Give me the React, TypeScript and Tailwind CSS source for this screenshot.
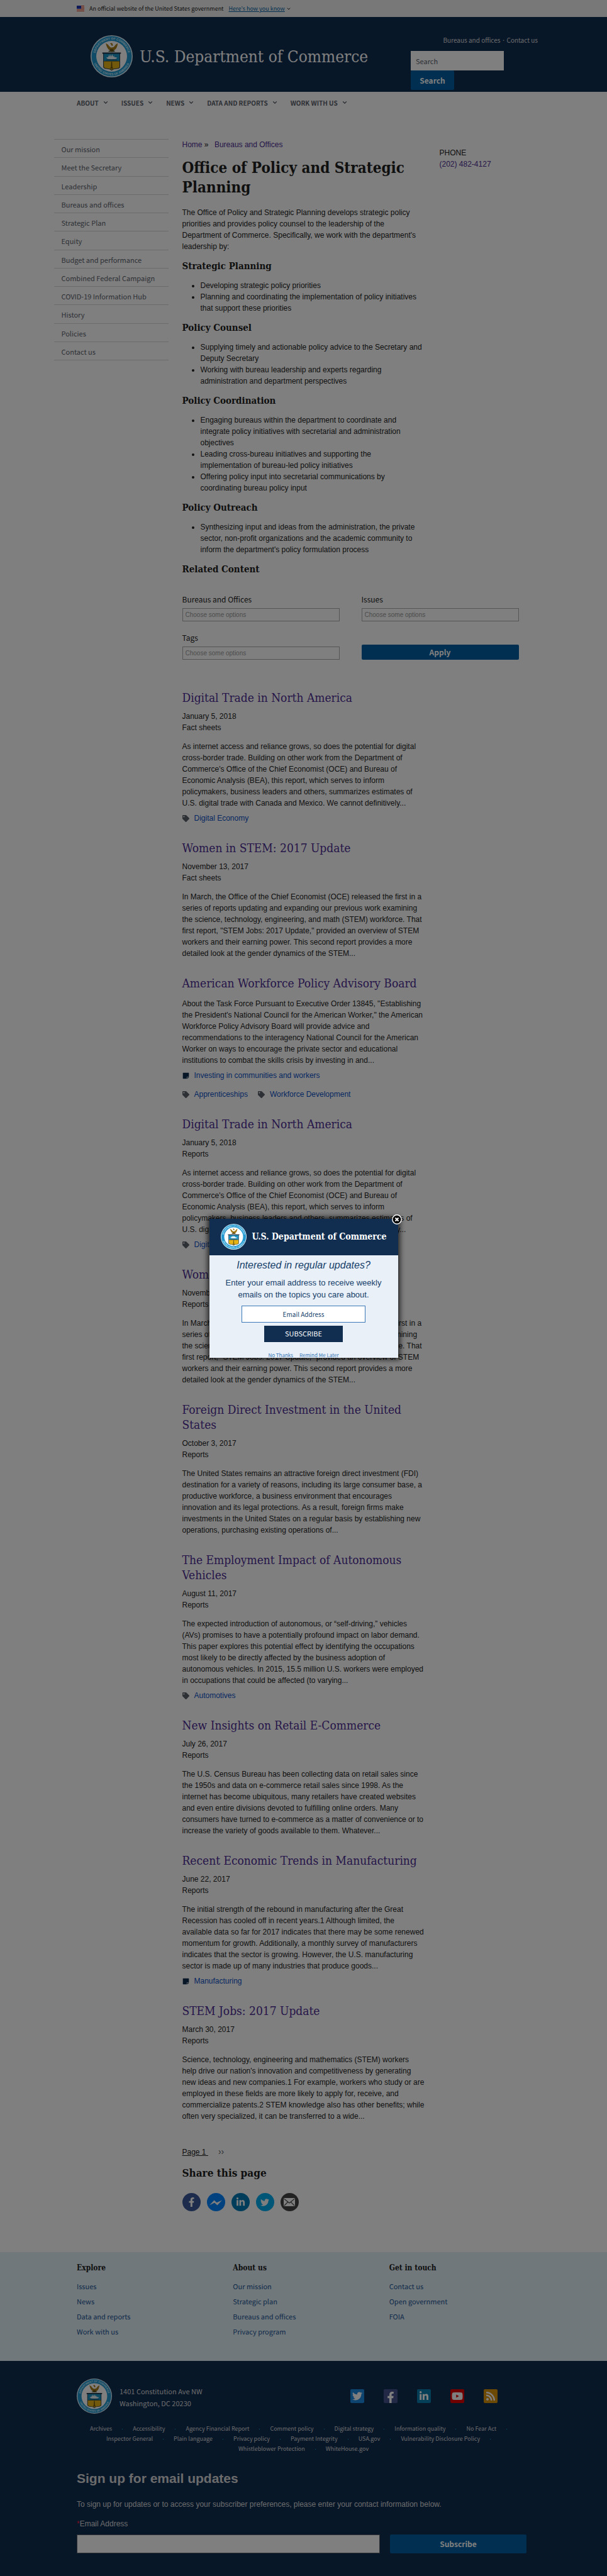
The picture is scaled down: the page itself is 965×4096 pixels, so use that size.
import React, { useId } from "react";
import {
  FaFacebookF,
  FaLinkedinIn,
  FaRss,
  FaStickyNote,
  FaTag,
  FaTwitter,
  FaYoutube,
} from "react-icons/fa";
import { ChevronDown } from "lucide-react";

const sans = "font-['Noto_Sans_CJK_JP','Noto_Sans_CJK_SC',sans-serif]";
const serif = "font-['DejaVu_Serif_Condensed','DejaVu_Serif',serif]";
const arial = "font-['Liberation_Sans',Arial,sans-serif]";

function Seal({ className }: { className: string }) {
  const id = useId();
  return (
    <svg viewBox="0 0 100 100" className={className} role="img" aria-label="Department of Commerce seal">
      <defs>
        <path id={`${id}t`} d="M10.5 50a39.5 39.5 0 0 1 79 0" />
        <path id={`${id}b`} d="M5 50a45 45 0 0 0 90 0" />
      </defs>
      <circle cx="50" cy="50" r="50" fill="#d8eef8" />
      <circle cx="50" cy="50" r="47.6" fill="#2196cf" />
      <circle cx="50" cy="50" r="36.5" fill="#fff" />
      <g fill="#c9ecfa" fontSize="7.4" fontWeight="700" fontFamily="Liberation Sans, Arial, sans-serif">
        <text textAnchor="middle">
          <textPath href={`#${id}t`} startOffset="50%">DEPARTMENT OF COMMERCE</textPath>
        </text>
        <text textAnchor="middle">
          <textPath href={`#${id}b`} startOffset="50%">UNITED STATES OF AMERICA</textPath>
        </text>
      </g>
      <g fill="#a67c1a">
        <path d="M50 25l-2-4-2-.5 2-1.700q2.500-.9 4 1l1 5.200z" />
        <path d="M36 19q3 14 10 17l3 3h4l3-3q7-4 8.500-17l-4.500 3-5 6-4 1h-3l-3-2-4-5z" />
        <path d="M42 39h16l-2-2.500H44z" fill="#3b4a35" />
        <path d="M46 33h8l-1 6h-6z" fill="#6b5514" />
      </g>
      <path d="M28 41h44v3h-2v31q0 4-8 5l-7 1-5 3-5-3-7-1q-8-1-8-5V44h-2z" fill="#1b3345" />
      <path d="M31.500 44h37v17h-37z" fill="#1d93c4" />
      <path d="M37 53l5-1 1-5 2 4 1-6 3 6 2-6 3 6 2-3v4l7 1-3 4H41z" fill="#e9f4f8" />
      <path d="M39 57q11 2 22 0M36 59.500h28" stroke="#12394f" strokeWidth="0.9" fill="none" />
      <path d="M31.500 62h37v13q0 2.500-6 3.500l-8 1.200-4.500 2.300-4.500-2.300-8-1.200q-6-1-6-3.500z" fill="#e6b316" />
      <path d="M49 63h2l.7 13 3 3.500h-9.400l3-3.500z" fill="#6b5514" />
    </svg>
  );
}

const navItems = ["About", "Issues", "News", "Data and reports", "Work with us"];

const sideItems = [
  "Our mission",
  "Meet the Secretary",
  "Leadership",
  "Bureaus and offices",
  "Strategic Plan",
  "Equity",
  "Budget and performance",
  "Combined Federal Campaign",
  "COVID-19 Information Hub",
  "History",
  "Policies",
  "Contact us",
];

const duties = [
  {
    title: "Strategic Planning",
    points: [
      "Developing strategic policy priorities",
      "Planning and coordinating the implementation of policy initiatives that support these priorities",
    ],
  },
  {
    title: "Policy Counsel",
    points: [
      "Supplying timely and actionable policy advice to the Secretary and Deputy Secretary",
      "Working with bureau leadership and experts regarding administration and department perspectives",
    ],
  },
  {
    title: "Policy Coordination",
    points: [
      "Engaging bureaus within the department to coordinate and integrate policy initiatives with secretarial and administration objectives",
      "Leading cross-bureau initiatives and supporting the implementation of bureau-led policy initiatives",
      "Offering policy input into secretarial communications by coordinating bureau policy input",
    ],
  },
  {
    title: "Policy Outreach",
    points: [
      "Synthesizing input and ideas from the administration, the private sector, non-profit organizations and the academic community to inform the department's policy formulation process",
    ],
  },
];

type Article = {
  title: string;
  date?: string;
  kind?: string;
  body: string;
  issues?: string[];
  tags?: string[];
};

const digitalTrade =
  "As internet access and reliance grows, so does the potential for digital cross-border trade. Building on other work from the Department of Commerce's Office of the Chief Economist (OCE) and Bureau of Economic Analysis (BEA), this report, which serves to inform policymakers, business leaders and others, summarizes estimates of U.S. digital trade with Canada and Mexico. We cannot definitively...";
const womenInStem =
  "In March, the Office of the Chief Economist (OCE) released the first in a series of reports updating and expanding our previous work examining the science, technology, engineering, and math (STEM) workforce. That first report, \"STEM Jobs: 2017 Update,\" provided an overview of STEM workers and their earning power. This second report provides a more detailed look at the gender dynamics of the STEM...";

const articles: Article[] = [
  { title: "Digital Trade in North America", date: "January 5, 2018", kind: "Fact sheets", body: digitalTrade, tags: ["Digital Economy"] },
  { title: "Women in STEM: 2017 Update", date: "November 13, 2017", kind: "Fact sheets", body: womenInStem },
  {
    title: "American Workforce Policy Advisory Board",
    body: "About the Task Force Pursuant to Executive Order 13845, \"Establishing the President's National Council for the American Worker,\" the American Workforce Policy Advisory Board will provide advice and recommendations to the interagency National Council for the American Worker on ways to encourage the private sector and educational institutions to combat the skills crisis by investing in and...",
    issues: ["Investing in communities and workers"],
    tags: ["Apprenticeships", "Workforce Development"],
  },
  { title: "Digital Trade in North America", date: "January 5, 2018", kind: "Reports", body: digitalTrade, tags: ["Digital Economy"] },
  { title: "Women in STEM: 2017 Update", date: "November 13, 2017", kind: "Reports", body: womenInStem },
  {
    title: "Foreign Direct Investment in the United States",
    date: "October 3, 2017",
    kind: "Reports",
    body: "The United States remains an attractive foreign direct investment (FDI) destination for a variety of reasons, including its large consumer base, a productive workforce, a business environment that encourages innovation and its legal protections. As a result, foreign firms make investments in the United States on a regular basis by establishing new operations, purchasing existing operations of...",
  },
  {
    title: "The Employment Impact of Autonomous Vehicles",
    date: "August 11, 2017",
    kind: "Reports",
    body: "The expected introduction of autonomous, or “self-driving,” vehicles (AVs) promises to have a potentially profound impact on labor demand. This paper explores this potential effect by identifying the occupations most likely to be directly affected by the business adoption of autonomous vehicles. In 2015, 15.5 million U.S. workers were employed in occupations that could be affected (to varying...",
    tags: ["Automotives"],
  },
  {
    title: "New Insights on Retail E-Commerce",
    date: "July 26, 2017",
    kind: "Reports",
    body: "The U.S. Census Bureau has been collecting data on retail sales since the 1950s and data on e-commerce retail sales since 1998. As the internet has become ubiquitous, many retailers have created websites and even entire divisions devoted to fulfilling online orders. Many consumers have turned to e-commerce as a matter of convenience or to increase the variety of goods available to them. Whatever...",
  },
  {
    title: "Recent Economic Trends in Manufacturing",
    date: "June 22, 2017",
    kind: "Reports",
    body: "The initial strength of the rebound in manufacturing after the Great Recession has cooled off in recent years.1 Although limited, the available data so far for 2017 indicates that there may be some renewed momentum for growth. Additionally, a monthly survey of manufacturers indicates that the sector is growing. However, the U.S. manufacturing sector is made up of many industries that produce goods...",
    issues: ["Manufacturing"],
  },
  {
    title: "STEM Jobs: 2017 Update",
    date: "March 30, 2017",
    kind: "Reports",
    body: "Science, technology, engineering and mathematics (STEM) workers help drive our nation's innovation and competitiveness by generating new ideas and new companies.1 For example, workers who study or are employed in these fields are more likely to apply for, receive, and commercialize patents.2 STEM knowledge also has other benefits; while often very specialized, it can be transferred to a wide...",
  },
];

const footerColumns = [
  { title: "Explore", links: ["Issues", "News", "Data and reports", "Work with us"] },
  { title: "About us", links: ["Our mission", "Strategic plan", "Bureaus and offices", "Privacy program"] },
  { title: "Get in touch", links: ["Contact us", "Open government", "FOIA"] },
];

const legalLinks = [
  "Archives",
  "Accessibility",
  "Agency Financial Report",
  "Comment policy",
  "Digital strategy",
  "Information quality",
  "No Fear Act",
  "Inspector General",
  "Plain language",
  "Privacy policy",
  "Payment Integrity",
  "USA.gov",
  "Vulnerability Disclosure Policy",
  "Whistleblower Protection",
  "WhiteHouse.gov",
];

function Flag() {
  return (
    <svg viewBox="0 0 12 9" className="h-[9px] w-3" aria-hidden="true">
      <path fill="#fff" d="M0 0h12v9H0z" />
      <path stroke="#db3e1f" d="M0 .5h12M0 2.500h12M0 4.500h12M0 6.500h12M0 8.500h12" />
      <path fill="#1e33b1" d="M0 0h7v5H0z" />
    </svg>
  );
}

function Banner() {
  return (
    <div className="bg-[#f1f1f1]">
      <div className={`mx-auto flex h-[27px] max-w-[745px] items-center px-3 text-[9px] text-[#212121] ${sans}`}>
        <Flag />
        <span className="ml-2">An official website of the United States government</span>
        <button type="button" className="ml-2 flex items-center gap-0.5 text-[#005ea2]">
          <span className="underline">Here's how you know</span>
          <ChevronDown className="size-2 text-[#212121]" strokeWidth={3} />
        </button>
      </div>
    </div>
  );
}

function Header() {
  return (
    <header>
      <div className="bg-[#112e51]">
        <div className="mx-auto flex h-[119px] max-w-[745px] justify-between pl-3">
          <a href="#home" className="ml-[22px] flex items-center gap-[11px] pt-1.5 text-white">
            <Seal className="size-[67px]" />
            <span className={`text-[26px] leading-8 whitespace-nowrap ${serif}`}>U.S. Department of Commerce</span>
          </a>
          <div className={`-mr-1 w-[206px] pt-7 ${sans}`}>
            <p className="pr-1 text-right text-[10px] leading-[18px] text-[#d6d7d9]">
              <a href="#bureaus">Bureaus and offices</a> · <a href="#contact">Contact us</a>
            </p>
            <form className="mt-2 flex flex-col items-start" onSubmit={(e) => e.preventDefault()}>
              <input
                type="search"
                aria-label="Search"
                placeholder="Search"
                className="h-[31px] w-[148px] bg-white px-2 text-[11px] text-[#5b616b] placeholder:text-[#5b616b]"
              />
              <button type="submit" className="h-[31px] w-[69px] rounded-xs bg-[#005ea2] text-[12px] font-bold text-white">
                Search
              </button>
            </form>
          </div>
        </div>
      </div>
      <nav className={`mx-auto max-w-[745px] px-3 ${sans}`}>
        <ul className="flex h-[34px] items-center gap-5">
          {navItems.map((item) => (
            <li key={item}>
              <button type="button" className="flex items-center gap-1.5 text-[10px] font-bold text-[#5b616b] uppercase">
                {item}
                <ChevronDown className="size-[10px]" strokeWidth={3} />
              </button>
            </li>
          ))}
        </ul>
      </nav>
    </header>
  );
}

function LabelList({ items, icon }: { items: string[]; icon: React.ReactNode }) {
  return (
    <ul className="flex gap-4">
      {items.map((item) => (
        <li key={item} className="flex items-center gap-2">
          {icon}
          <a href="#topic" className="text-[#0b4fc4]">{item}</a>
        </li>
      ))}
    </ul>
  );
}

function ArticleItem({ article }: { article: Article }) {
  return (
    <article>
      <h3 className={`text-[19px] leading-6 text-[#4c2c92] ${serif}`}>
        <a href="#article">{article.title}</a>
      </h3>
      {article.date && (
        <div className="mt-[9px]">
          <p>{article.date}</p>
          <p>{article.kind}</p>
        </div>
      )}
      <p className="mt-3">{article.body}</p>
      {(article.issues || article.tags) && (
        <div className="mt-1.5 flex flex-col gap-3">
          {article.issues && (
            <LabelList items={article.issues} icon={<FaStickyNote className="size-[11px] text-[#112e51]" />} />
          )}
          {article.tags && <LabelList items={article.tags} icon={<FaTag className="size-[11px] text-[#5b616b]" />} />}
        </div>
      )}
    </article>
  );
}

function Picker({ label }: { label: string }) {
  const id = useId();
  return (
    <div className="flex flex-col gap-[5px]">
      <label htmlFor={id} className={`text-[12px] leading-[18px] ${sans}`}>{label}</label>
      <input
        id={id}
        placeholder="Choose some options"
        className="h-[21px] border border-[#aaa] bg-white px-1 text-[10px] placeholder:text-[#999]"
      />
    </div>
  );
}

function Share() {
  const round = "flex size-[29px] items-center justify-center rounded-full text-white";
  return (
    <section>
      <h3 className={`mt-3 text-[17px] leading-6 font-bold ${serif}`}>Share this page</h3>
      <div className="mt-5 flex gap-[10px]">
        <a href="#facebook" aria-label="Facebook" className={`${round} bg-[#3b5998]`}><FaFacebookF className="size-[15px]" /></a>
        <a href="#messenger" aria-label="Messenger" className={`${round} bg-[#0084ff]`}>
          <svg viewBox="0 0 20 12" className="h-3 w-5"><path fill="currentColor" d="M0 10.500 7.500 2.500l4 3.700L20 2.500 12.500 10.500 8 6.500z" /></svg>
        </a>
        <a href="#linkedin" aria-label="LinkedIn" className={`${round} bg-[#007bb5]`}><FaLinkedinIn className="size-[15px]" /></a>
        <a href="#twitter" aria-label="Twitter" className={`${round} bg-[#00aced]`}><FaTwitter className="size-[14px]" /></a>
        <a href="#email" aria-label="Email" className={`${round} bg-[#444]`}>
          <svg viewBox="0 0 18 13" className="h-[13px] w-[18px]">
            <rect width="18" height="13" rx="1.500" fill="currentColor" />
            <path d="M1 1.500l8 6.500 8-6.500M1 12l5.500-5.500M17 12l-5.500-5.500" fill="none" stroke="#444" strokeWidth="1.100" />
          </svg>
        </a>
      </div>
    </section>
  );
}

function Main() {
  return (
    <div className="mx-auto mt-[41px] flex max-w-[794px] gap-[22px] pb-[65px]">
      <nav aria-label="Section" className={`w-[182px] shrink-0 ${sans}`}>
        <ul className="grid h-[352px] auto-rows-fr border-t border-[#d6d7d9]">
          {sideItems.map((item) => (
            <li key={item} className="flex items-center border-b border-[#d6d7d9] pt-0.5 pl-3 text-[11px] leading-4 text-[#5b616b]">
              <a href="#section">{item}</a>
            </li>
          ))}
        </ul>
      </nav>

      <main className={`min-w-0 flex-1 text-[12px] leading-[18px] text-[#212121] ${arial}`}>
        <div className="flex justify-between">
          <div className="max-w-[384px]">
            <p className="text-[#4c2c92]">
              <a href="#home">Home</a> <span className="mr-1.5 text-[#212121]">»</span> <a href="#bureaus">Bureaus and Offices</a>
            </p>
            <h1 className={`mt-3 text-[24px] leading-[31px] font-bold ${serif}`}>Office of Policy and Strategic Planning</h1>
            <p className="mt-4">
              The Office of Policy and Strategic Planning develops strategic policy priorities and provides policy counsel to
              the leadership of the Department of Commerce. Specifically, we work with the department's leadership by:
            </p>
            {duties.map((duty) => (
              <section key={duty.title}>
                <h3 className={`my-3 text-[15px] leading-5 font-bold ${serif}`}>{duty.title}</h3>
                <ul className="list-disc pl-[29px]">
                  {duty.points.map((point) => (
                    <li key={point}>{point}</li>
                  ))}
                </ul>
              </section>
            ))}
            <h3 className={`mt-3 text-[15px] leading-5 font-bold ${serif}`}>Related Content</h3>
          </div>
          <aside className="w-[181px] pt-[13px]">
            <p>PHONE</p>
            <a href="#phone" className="text-[#4c2c92]">(202) 482-4127</a>
          </aside>
        </div>

        <form className="mt-[29px] grid max-w-[535px] grid-cols-2 items-end gap-x-[35px] gap-y-[17px]" onSubmit={(e) => e.preventDefault()}>
          <Picker label="Bureaus and Offices" />
          <Picker label="Issues" />
          <Picker label="Tags" />
          <button type="submit" className={`h-6 rounded-xs bg-[#005ea2] text-[12px] font-bold text-white ${sans}`}>Apply</button>
        </form>

        <div className="mt-12 flex max-w-[386px] flex-col gap-[26px]">
          {articles.map((article, i) => (
            <ArticleItem key={i} article={article} />
          ))}
        </div>

        <p className="mt-[38px]">
          <span className="underline">Page 1&nbsp;</span>
          <a href="#next" className="ml-4 text-[14px] text-[#5b616b]">››</a>
        </p>
        <Share />
      </main>
    </div>
  );
}

function Footer() {
  const square = "flex size-[22px] items-center justify-center rounded-xs text-white";
  return (
    <footer className={sans}>
      <div className="bg-[#e1f0f8]">
        <div className="mx-auto h-[173px] max-w-[745px] pt-4 pl-3">
          <div className="-mr-3 grid grid-cols-3">
            {footerColumns.map((column) => (
              <div key={column.title}>
                <h4 className={`text-[12px] leading-[18px] font-bold text-[#212121] ${serif}`}>{column.title}</h4>
                <ul className="mt-2 text-[11px] leading-6 text-[#205493]">
                  {column.links.map((link) => (
                    <li key={link}><a href="#link">{link}</a></li>
                  ))}
                </ul>
              </div>
            ))}
          </div>
        </div>
      </div>
      <div className="bg-[#112e51] text-[#d6d7d9]">
        <div className="mx-auto max-w-[745px] px-3 pt-7 pb-[37px]">
          <div className="flex items-center justify-between pr-[52px]">
            <div className="flex items-center gap-3">
              <Seal className="size-14" />
              <address className="pt-1 text-[11px] leading-[19px] not-italic">
                1401 Constitution Ave NW
                <br />
                Washington, DC 20230
              </address>
            </div>
            <div className="flex gap-[31px]">
              <a href="#twitter" aria-label="Twitter" className={`${square} bg-[#1c8be0]`}><FaTwitter className="size-4" /></a>
              <a href="#facebook" aria-label="Facebook" className={`${square} items-end! bg-[#43528f]`}><FaFacebookF className="size-[18px]" /></a>
              <a href="#linkedin" aria-label="LinkedIn" className={`${square} bg-[#0a7fae]`}><FaLinkedinIn className="size-4" /></a>
              <a href="#youtube" aria-label="YouTube" className={`${square} bg-[#e00000]`}><FaYoutube className="size-[18px]" /></a>
              <a href="#rss" aria-label="RSS" className={`${square} bg-[#d9920a]`}><FaRss className="size-4" /></a>
            </div>
          </div>
          <ul className="mt-4 flex flex-wrap justify-center text-[9px] leading-4">
            {legalLinks.map((link, i) => (
              <li key={link} className="flex items-center">
                <a href="#legal">{link}</a>
                {i < legalLinks.length - 1 && <span className="mx-4 size-px bg-[#02bfe7]" />}
              </li>
            ))}
          </ul>
          <form className={arial} onSubmit={(e) => e.preventDefault()}>
            <h2 className="mt-[25px] text-[21px] leading-7 font-bold">Sign up for email updates</h2>
            <p className="mt-[18px] text-[12px] leading-[18px]">
              To sign up for updates or to access your subscriber preferences, please enter your contact information below.
            </p>
            <label htmlFor="signup" className="mt-[13px] block text-[12px] leading-[18px]">
              <span className="text-[#e31c3d]">*</span>Email Address
            </label>
            <div className="mt-2 flex gap-4 pr-[6px]">
              <input id="signup" type="email" className="h-[30px] min-w-0 flex-1 border border-[#5b616b] bg-white px-2 text-[12px] text-[#212121]" />
              <button type="submit" className={`h-[30px] w-[217px] rounded-xs bg-[#005ea2] text-[12px] font-bold text-white ${sans}`}>
                Subscribe
              </button>
            </div>
          </form>
        </div>
      </div>
    </footer>
  );
}

function UpdatesDialog() {
  return (
    <div className="fixed inset-0 flex items-center justify-center bg-black/50">
      <div role="dialog" aria-label="Interested in regular updates?" className="relative h-[221px] w-[300px] shadow-[0_0_8px_3px_rgba(0,0,0,0.7)]">
        <div className={`flex h-full flex-col overflow-hidden bg-[#e9f0f7] text-center text-[#163f6b] ${arial}`}>
          <div className="flex h-[58px] shrink-0 items-center gap-[9px] bg-[#112e51] pl-[18px]">
            <Seal className="size-[41px] shrink-0" />
            <span className={`text-[14px] font-bold whitespace-nowrap text-white ${serif}`}>U.S. Department of Commerce</span>
          </div>
          <h2 className="mt-1.5 text-[16px] leading-5 italic">Interested in regular updates?</h2>
          <p className="mt-2 px-6 text-[13px] leading-[19px]">Enter your email address to receive weekly emails on the topics you care about.</p>
          <input
            type="email"
            aria-label="Email Address"
            placeholder="Email Address"
            className={`mx-auto mt-2 h-[27px] w-[197px] shrink-0 border border-[#3a78b8] bg-white text-center text-[10px] placeholder:text-[#163f6b] ${sans}`}
          />
          <button type="button" className={`mx-auto mt-[5px] h-[26px] w-[125px] shrink-0 bg-[#112e51] text-[11px] text-white ${sans}`}>SUBSCRIBE</button>
          <div className={`mt-[15px] flex shrink-0 justify-center gap-[10px] text-[8px] leading-3 text-[#3a78b8] ${sans}`}>
            <button type="button">No Thanks</button>
            <button type="button">Remind Me Later</button>
          </div>
        </div>
        <button type="button" aria-label="Close" className="absolute -top-[7px] -right-[6px]">
          <svg viewBox="0 0 16 16" className="size-4">
            <circle cx="8" cy="8" r="7.200" fill="#000" stroke="#fff" strokeWidth="1.400" />
            <path d="M5.500 5.500l5 5M10.500 5.500l-5 5" stroke="#fff" strokeWidth="2" />
          </svg>
        </button>
      </div>
    </div>
  );
}

export default function App() {
  return (
    <div className="bg-white">
      <Banner />
      <Header />
      <Main />
      <Footer />
      <UpdatesDialog />
    </div>
  );
}
